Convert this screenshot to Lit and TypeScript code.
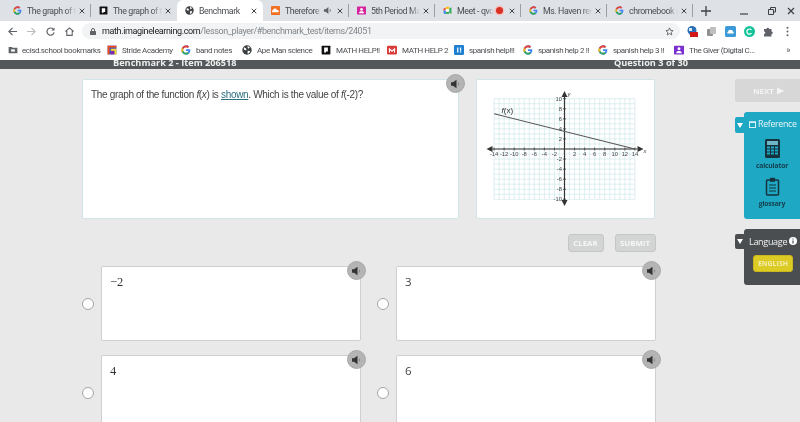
import { LitElement, html, css, svg } from "lit";
import { customElement } from "lit/decorators.js";

const G = () => html`<svg class="fav" viewBox="0 0 16 16"><path d="M14.7 6.6H8v2.9h3.9c-.4 1.9-2 3-3.9 3a4.5 4.5 0 0 1 0-9c1.1 0 2.1.4 2.9 1.1l2.1-2.1A7.400 7.400 0 0 0 .6 8 7.400 7.400 0 0 0 8 15.400c3.700 0 7-2.700 7-7.400 0-.500-.100-.900-.300-1.400z" fill="#4285f4"/><path d="M1.400 4.700 3.800 6.500A4.500 4.500 0 0 1 8 3.500c1.100 0 2.100.4 2.900 1.100l2.100-2.100A7.400 7.400 0 0 0 1.400 4.700z" fill="#ea4335"/><path d="M1.400 11.300 3.800 9.500A4.500 4.500 0 0 0 8 12.500c1 0 1.900-.300 2.600-.800l2.300 1.800A7.400 7.400 0 0 1 1.400 11.300z" fill="#34a853"/><path d="M3.800 9.500a4.500 4.500 0 0 1 0-3L1.400 4.700a7.400 7.400 0 0 0 0 6.600z" fill="#fbbc05"/></svg>`;
const Globe = () => html`<svg class="fav" viewBox="0 0 16 16"><circle cx="8" cy="8" r="7.500" fill="#3c4043"/><path d="M3 3.500 6 5l1.500 2-2 1.500L3 7zM9 1.500l3.500 2L10.500 6 9 4.500zM9 9l4 .5-1.500 3.500L9 14z" fill="#fff"/></svg>`;
const Nb = () => html`<svg class="fav" viewBox="0 0 16 16"><rect x="1" y="1" width="14" height="14" rx="1" fill="#111"/><path d="M5 4h6v6.500H8V12H5z" fill="#fff"/></svg>`;
const Cloud = () => html`<svg class="fav" viewBox="0 0 16 16"><rect width="16" height="16" rx="1.500" fill="#f26f23"/><path d="M2 11V8.500c.5-1 1-1 1.500-1 .3-1.500 1.500-3 3.500-3 1.800 0 3 1 3.500 2.500C12 6.800 14 7.500 14 9.200 14 10.500 13 11 12 11z" fill="#fff"/></svg>`;
const Person = (c: string) => html`<svg class="fav" viewBox="0 0 16 16"><rect y="1" width="16" height="14" rx="1" fill="${c}"/><circle cx="8" cy="6" r="2.300" fill="#fff"/><path d="M3.500 13c0-2.500 2-3.500 4.500-3.500s4.500 1 4.500 3.500z" fill="#fff"/></svg>`;
const Meet = () => html`<svg class="fav" viewBox="0 0 16 16"><path d="M1 4h4v4H1z" fill="#ea4335"/><path d="M5 1.500h6v4H5z" fill="#fbbc05"/><path d="M1 8h4v6H2.500L1 12.500z" fill="#4285f4"/><path d="M5 10h6v4H5z" fill="#34a853"/><path d="M11 4.500 15 2v12l-4-2.500z" fill="#34a853"/><rect x="5" y="5" width="6" height="5" fill="#fff"/></svg>`;
const X = () => html`<svg class="close" viewBox="0 0 8 8"><path d="M1 1l6 6M7 1 1 7" stroke="#3c4043" stroke-width="1.300" fill="none"/></svg>`;
const Spk = () => html`<svg class="spk" viewBox="0 0 10 10"><path d="M0 3.300h2L5.500 .8v8.400L2 6.700H0z" fill="#333"/><path d="M7 3.500a2 2 0 0 1 0 3" stroke="#888" fill="none"/></svg>`;

const tabs = [
  { icon: G(), t: "The graph of th", sep: true },
  { icon: Nb(), t: "The graph of th" },
  { icon: Globe(), t: "Benchmark", active: true },
  { icon: Cloud(), t: "Therefore I", extra: html`<svg class="ex" viewBox="0 0 10 10"><path d="M1 3.500h2L6 1v8L3 6.500H1z" fill="#5f6368"/><path d="M7.500 3.500a2 2 0 0 1 0 3" stroke="#5f6368" fill="none"/></svg>`, sep: true },
  { icon: Person("#d6249f"), t: "5th Period Mat", sep: true },
  { icon: Meet(), t: "Meet - qvo-", extra: html`<span class="rec"></span>`, sep: true },
  { icon: G(), t: "Ms. Haven reco", sep: true },
  { icon: G(), t: "chromebook sc", sep: true },
];

const marks = [
  { w: 99, i: html`<svg class="fav" viewBox="0 0 16 16"><path d="M1 3h5l1.500 1.500H15V13H1z" fill="#5f6368"/><rect x="5" y="7" width="6" height="3.500" fill="#fff"/></svg>`, t: "ecisd.school bookmarks", first: true },
  { w: 74, i: html`<svg class="fav" viewBox="0 0 16 16"><rect x="1" y="1" width="14" height="14" fill="#3f51b5"/><path d="M1 1h14v3H4v11H1z" fill="#f4511e"/><path d="M6 6h9v9h-3V9H6z" fill="#fdd835"/><rect x="6" y="10" width="5" height="5" fill="#8e24aa"/></svg>`, t: "Stride Academy" },
  { w: 61, i: G(), t: "band notes" },
  { w: 79, i: Globe(), t: "Ape Man science" },
  { w: 66, i: Nb(), t: "MATH HELP!!" },
  { w: 67, i: html`<svg class="fav" viewBox="0 0 16 16"><rect y="1" width="16" height="14" rx="2" fill="#d93a3a"/><path d="M3 12V4.500l5 4 5-4V12h-2V8.500l-3 2.500-3-2.500V12z" fill="#fff"/></svg>`, t: "MATH HELP 2" },
  { w: 69, i: html`<svg class="fav" viewBox="0 0 16 16"><rect width="16" height="16" rx="2" fill="#1e7fd0"/><path d="M5 4h2v8H5zM9.500 4h2v5h-2zM9.500 10h2v2h-2z" fill="#fff"/></svg>`, t: "spanish help!!!" },
  { w: 75, i: G(), t: "spanish help 2 !!" },
  { w: 76, i: G(), t: "spanish help 3 !!" },
  { w: 107, i: Person("#7b2fd0"), t: "The Giver (Digital C..." },
];

function graph() {
  const U = 5.03, ox = 70, oy = 70;
  const lines = [];
  for (let i = -14; i <= 14; i++) lines.push(svg`<line x1=${ox + i * U} y1=${oy - 50.3} x2=${ox + i * U} y2=${oy + 50.3} class="g"/>`);
  for (let i = -10; i <= 10; i++) lines.push(svg`<line x1=${ox - 70.4} y1=${oy + i * U} x2=${ox + 70.4} y2=${oy + i * U} class="g"/>`);
  const labels = [];
  for (let i = -14; i <= 14; i += 2) {
    if (i === 0) continue;
    lines.push(svg`<line x1=${ox + i * U} y1=${oy - 1.500} x2=${ox + i * U} y2=${oy + 1.500} class="t"/>`);
    labels.push(svg`<text x=${ox + i * U} y=${oy + 7} text-anchor="middle" class="n">${i < 0 ? "-" + -i : i}</text>`);
  }
  for (let i = -10; i <= 10; i += 2) {
    if (i === 0) continue;
    lines.push(svg`<line x1=${ox - 1.500} y1=${oy - i * U} x2=${ox + 1.500} y2=${oy - i * U} class="t"/>`);
    labels.push(svg`<text x=${ox - 2.500} y=${oy - i * U + 2} text-anchor="end" class="n">${i}</text>`);
  }
  return html`<svg class="graph" viewBox="0 0 179 140" width="179" height="140">
    <g transform="translate(18.500 0)">
      ${lines}
      <line x1=${ox - 72} y1=${oy} x2=${ox + 73} y2=${oy} class="a"/>
      <line x1=${ox} y1=${oy - 52} x2=${ox} y2=${oy + 52} class="a"/>
      <path d=${`M${ox - 78} ${oy}l6-3v6z M${ox + 79} ${oy}l-6-3v6z M${ox} ${oy - 58}l-3 6h6z M${ox} ${oy + 57}l-3-6h6z`} fill="#333"/>
      <line x1=${ox - 70.4} y1=${oy - 35.2} x2=${ox + 70.4} y2=${oy} stroke="#555" stroke-width="1.100"/>
      ${labels}
      <text x=${ox + 3} y=${oy - 53} class="n i">y</text>
      <text x=${ox + 79} y=${oy + 4} class="n i">x</text>
      <text x=${ox - 63} y=${oy - 36} class="fx"><tspan font-style="italic">f</tspan>(x)</text>
    </g>
  </svg>`;
}

const answers = [
  { t: "−2", serif: true },
  { t: "3" },
  { t: "4", serif: true },
  { t: "6" },
];

@customElement("app-root")
export class AppRoot extends LitElement {
  static styles = css`
    :host { display: block; width: 800px; height: 422px; overflow: hidden; background: #e9e9e9; font-family: "Liberation Sans", Arial, sans-serif; filter: blur(0.25px); }
    svg { display: block; flex: none; }
    .tabs { height: 21px; background: #dee1e6; display: flex; align-items: center; padding-left: 5px; font: 8.800px Roboto, sans-serif; letter-spacing: -0.400px; color: #4a4d51; }
    .tab { width: 86px; height: 21px; box-sizing: border-box; display: flex; align-items: center; padding: 0 4px 0 8px; position: relative; flex: none; }
    .tab.active { background: #fff; border-radius: 6px 6px 0 0; }
    .tab.sep::after { content: ""; position: absolute; right: 0; top: 4px; height: 13px; width: 1px; background: #9aa0a6; }
    .fav { width: 9px; height: 9px; margin-right: 5px; }
    .title { flex: 1; white-space: nowrap; overflow: hidden; -webkit-mask-image: linear-gradient(90deg, #000 80%, transparent); mask-image: linear-gradient(90deg, #000 80%, transparent); }
    .active .title { -webkit-mask-image: none; mask-image: none; }
    .close { width: 6px; height: 6px; margin-left: 3px; margin-right: 2px; }
    .ex { width: 9px; height: 9px; margin-left: 1px; margin-right: 2px; }
    .rec { width: 7px; height: 7px; border-radius: 50%; background: #d93025; box-shadow: 0 0 0 1.500px #f3c2bd; margin: 0 3px 0 2px; flex: none; }
    .plus { margin-left: 8px; width: 10px; height: 10px; }
    .win { margin-left: auto; display: flex; align-items: center; gap: 11px; padding-right: 5px; }
    .win svg { width: 8px; height: 8px; }
    .win svg:first-child { margin-right: 9px; }
    .tool { height: 20px; display: flex; align-items: center; padding-left: 8px; background: #fff; box-sizing: border-box; }
    .tool .nav { width: 9px; height: 9px; margin-right: 10px; }
    .omni { width: 598px; margin-left: -2px; height: 16px; box-sizing: border-box; border-radius: 8px; background: #f1f3f4; display: flex; align-items: center; padding: 0 6px 0 8px; font: 9px Roboto, sans-serif; color: #80868b; white-space: nowrap; letter-spacing: -0.370px; }
    .omni b { font-weight: 400; color: #202124; }
    .lock { width: 6px; height: 7px; margin-right: 6px; }
    .star { width: 9px; height: 9px; margin-left: auto; }
    .exts { display: flex; align-items: center; gap: 8px; padding-left: 7px; }
    .exts svg { width: 11px; height: 11px; }
    .marks { height: 19px; display: flex; align-items: center; padding-left: 8px; background: #fff; font: 8px Roboto, sans-serif; letter-spacing: -0.380px; color: #4a4d51; box-sizing: border-box; padding-bottom: 1px; }
    .mark { display: flex; align-items: center; white-space: nowrap; flex: none; }
    .mark .fav { width: 10px; height: 10px; margin-right: 5px; }
    .mark.first .fav { margin-right: 4px; }
    .more { margin-left: auto; padding-right: 10px; font-size: 9px; }
    .bar { height: 9px; background: #54585a; overflow: hidden; display: flex; color: #eee; font: bold 9.200px "Open Sans", sans-serif; line-height: 9px; }
    .bar span { margin-top: -2px; white-space: nowrap; }
    .bar .l { margin-left: 113px; width: 501px; flex: none; }
    .main { display: flex; padding: 10px 0 0 82px; align-items: flex-start; }
    .left { width: 574px; flex: none; }
    .top { display: flex; gap: 17px; height: 140px; }
    .prompt, .gcard { background: #fff; border: 1px solid #cfe5e8; border-radius: 2px; box-sizing: border-box; position: relative; }
    .prompt { width: 377px; padding: 8px 8px; font-size: 10px; letter-spacing: -0.330px; line-height: 14px; color: #444; }
    .prompt a { color: #2d6f80; text-decoration: underline; }
    .gcard { width: 179px; overflow: hidden; }
    .graph { margin: -1px; }
    .graph .g { stroke: #c9e4e8; stroke-width: 0.600px; }
    .graph .t { stroke: #333; stroke-width: 0.700px; }
    .graph .a { stroke: #333; stroke-width: 1.200px; }
    .graph .n { font: 5.800px "Liberation Sans", sans-serif; fill: #444; }
    .graph .i { font-style: italic; }
    .graph .fx { font: 8px "Liberation Sans", sans-serif; fill: #333; }
    .actions { display: flex; justify-content: flex-end; gap: 11px; margin-top: 15px; padding-right: 0.500px; }
    .btn { height: 18px; box-sizing: border-box; background: #d3d5d4; border: 1px solid #c4c7c6; border-radius: 3px; color: #f6f6f6; font: bold 7.800px "Open Sans", sans-serif; display: flex; align-items: center; justify-content: center; }
    .btn.c { width: 36px; }
    .btn.s { width: 41px; }
    .answers { display: grid; grid-template-columns: 260px 260px; column-gap: 35px; row-gap: 14px; margin-top: 14px; padding-left: 19px; }
    .ans { display: block; position: relative; height: 75px; box-sizing: border-box; background: #fff; border: 1px solid #cfcfcf; border-radius: 2px; padding: 8px; font: 11.500px "Open Sans", sans-serif; color: #444; line-height: 14px; }
    .ans.serif { font-family: "Liberation Serif", serif; font-size: 12.500px; color: #333; }
    .radio { position: absolute; left: -20px; top: 31px; width: 12px; height: 12px; box-sizing: border-box; background: #fff; border: 1px solid #a5a5a5; border-radius: 50%; }
    .sound { position: absolute; top: -6px; right: -6px; width: 19px; height: 19px; box-sizing: border-box; border-radius: 50%; background: #b4b4b4; border: 1px solid #a8a8a8; display: flex; align-items: center; justify-content: center; }
    .prompt .sound { top: -6px; right: -7px; }
    .spk { width: 10px; height: 10px; }
    .right { margin-left: 79px; width: 65px; flex: none; color: #fff; }
    .next { height: 23px; background: #d7d7d7; border-radius: 2px 0 0 2px; display: flex; align-items: center; justify-content: center; font: bold 7.800px "Open Sans", sans-serif; color: #f4f4f4; gap: 3px; padding-left: 2px; box-sizing: border-box; }
    .panel { margin: 10px 0 0 9px; position: relative; border-radius: 3px 0 0 3px; box-sizing: border-box; }
    .panel.ref { background: #1fa8c4; height: 107px; padding-top: 5px; }
    .panel.lang { background: #4b4e50; height: 56px; margin-top: 10px; padding-top: 5px; }
    .ptab { position: absolute; left: -9px; top: 5px; width: 10px; height: 16px; border-radius: 2px 0 0 2px; display: flex; align-items: center; justify-content: center; background: #1fa8c4; }
    .lang .ptab { background: #4b4e50; height: 15px; }
    .ptab svg { width: 6px; height: 5px; }
    .phead { display: flex; align-items: center; padding-left: 5px; gap: 2px; font: 8.800px "Open Sans", sans-serif; letter-spacing: -0.300px; height: 14px; color: #e9f7fa; white-space: nowrap; }
    .phead svg { width: 7px; height: 7px; }
    .tool-item { display: flex; flex-direction: column; align-items: center; color: #15414f; font: bold 6.800px "Open Sans", sans-serif; letter-spacing: -0.200px; margin-top: 8px; }
    .tool-item svg { width: 15px; height: 19px; margin-bottom: 3px; }
    .tool-item + .tool-item { margin-top: 7px; }
    .lang .phead { color: #f2f2f2; padding-left: 5px; gap: 2px; font-size: 9px; }
    .lang .phead svg { width: 8px; height: 8px; }
    .eng { margin: 7px 0 0 9px; width: 40px; height: 17px; box-sizing: border-box; background: #dcca25; border: 1px solid #c9b71d; border-radius: 3px; color: #f5eeb0; font: bold 6.800px "Open Sans", sans-serif; display: flex; align-items: center; justify-content: center; letter-spacing: 0.020em; }
  `;

  render() {
    return html`
      <div class="tabs">
        ${tabs.map((t) => html`<div class="tab ${t.active ? "active" : ""} ${t.sep ? "sep" : ""}">${t.icon}<span class="title">${t.t}</span>${t.extra ?? ""}${X()}</div>`)}
        <svg class="plus" viewBox="0 0 10 10"><path d="M5 0v10M0 5h10" stroke="#3c4043" stroke-width="1.300"/></svg>
        <div class="win">
          <svg viewBox="0 0 8 8"><path d="M0 7h8" stroke="#3c4043" stroke-width="1.200"/></svg>
          <svg viewBox="0 0 8 8"><path d="M2.500 2.500V.5h5v4.500H5.500M.5 2.500h5v5h-5z" stroke="#3c4043" fill="none"/></svg>
          <svg viewBox="0 0 8 8"><path d="M1 1l6 6M7 1 1 7" stroke="#3c4043" stroke-width="1.200"/></svg>
        </div>
      </div>
      <div class="tool">
        <svg class="nav" viewBox="0 0 10 10"><path d="M10 5H1M5 1 1 5l4 4" stroke="#5f6368" stroke-width="1.300" fill="none"/></svg>
        <svg class="nav" viewBox="0 0 10 10"><path d="M0 5h9M5 1l4 4-4 4" stroke="#b9bcc0" stroke-width="1.300" fill="none"/></svg>
        <svg class="nav" viewBox="0 0 10 10"><path d="M8.500 3A4 4 0 1 0 9 6" stroke="#5f6368" stroke-width="1.300" fill="none"/><path d="M9.500 .5v3.500H6z" fill="#5f6368"/></svg>
        <svg class="nav" viewBox="0 0 10 10"><path d="M.5 5 5 1l4.500 4M2 4.500V9.300h6V4.500" stroke="#5f6368" stroke-width="1.200" fill="none"/></svg>
        <div class="omni">
          <svg class="lock" viewBox="0 0 6 7"><path d="M1.500 3V2a1.500 1.500 0 0 1 3 0v1" stroke="#5f6368" fill="none"/><rect y="3" width="6" height="4" rx=".5" fill="#5f6368"/></svg>
          <span><b>math.imaginelearning.com</b>/lesson_player/#benchmark_test/items/24051</span>
          <svg class="star" viewBox="0 0 10 10"><path d="M5 1l1.200 2.700 2.800.3-2.100 1.900.6 2.900L5 7.300 2.500 8.800l.6-2.900L1 4l2.800-.3z" stroke="#5f6368" fill="none"/></svg>
        </div>
        <div class="exts">
          <svg viewBox="0 0 11 11"><circle cx="5" cy="4.500" r="4.500" fill="#2a6cb5"/><path d="M2 2h3v3H2z" fill="#dbe9f5"/><rect x="3" y="6" width="8" height="5" rx=".5" fill="#d01616"/></svg>
          <svg viewBox="0 0 11 11"><rect x="1" y="3" width="6" height="7" rx="1" fill="#8d8f91"/><rect x="4" y="1" width="6" height="7" rx="1" fill="#bdbfc1"/></svg>
          <svg viewBox="0 0 11 11"><rect width="11" height="11" rx="1.500" fill="#3c9bd6"/><path d="M2.500 7.500h6V6.200L7 4H4L2.500 6.200z" fill="#fff"/></svg>
          <svg viewBox="0 0 11 11"><circle cx="5.500" cy="5.500" r="5.500" fill="#15c39a"/><path d="M7.500 4a2.600 2.600 0 1 0 0 3.200" stroke="#fff" stroke-width="1.200" fill="none"/></svg>
          <svg viewBox="0 0 11 11"><path d="M1 3h2.500a1.300 1.300 0 0 1 2.600 0H8.500v2.500a1.300 1.300 0 0 1 0 2.600V10.500H1V8a1.300 1.300 0 0 0 0-2.600z" fill="#5f6368"/></svg>
          <svg viewBox="0 0 11 11"><circle cx="5.500" cy="1.700" r="1" fill="#5f6368"/><circle cx="5.500" cy="5.500" r="1" fill="#5f6368"/><circle cx="5.500" cy="9.300" r="1" fill="#5f6368"/></svg>
        </div>
      </div>
      <div class="marks">
        ${marks.map((m) => html`<div class="mark ${m.first ? "first" : ""}" style="width:${m.w}px">${m.i}<span>${m.t}</span></div>`)}
        <span class="more">»</span>
      </div>
      <div class="bar"><span class="l">Benchmark 2 - Item 206518</span><span>Question 3 of 30</span></div>
      <div class="main">
        <div class="left">
          <div class="top">
            <div class="prompt">The graph of the function <i>f</i>(<i>x</i>) is <a>shown</a>. Which is the value of <i>f</i>(-2)?<div class="sound">${Spk()}</div></div>
            <div class="gcard">${graph()}</div>
          </div>
          <div class="actions"><div class="btn c">CLEAR</div><div class="btn s">SUBMIT</div></div>
          <div class="answers">
            ${answers.map((a) => html`<div class="ans ${a.serif ? "serif" : ""}"><span class="radio"></span>${a.t}<div class="sound">${Spk()}</div></div>`)}
          </div>
        </div>
        <div class="right">
          <div class="next">NEXT <svg width="7" height="8" viewBox="0 0 8 8"><path d="M0 0l8 4-8 4z" fill="#f4f4f4"/></svg></div>
          <div class="panel ref">
            <div class="ptab"><svg viewBox="0 0 6 5"><path d="M0 0h6L3 5z" fill="#fff"/></svg></div>
            <div class="phead"><svg viewBox="0 0 7 7"><rect x=".5" y="1" width="6" height="5.500" stroke="#d8f1f6" fill="none"/><rect y=".5" width="7" height="1.500" fill="#d8f1f6"/></svg>Reference</div>
            <div class="tool-item">
              <svg viewBox="0 0 15 19"><rect width="15" height="19" rx="1.500" fill="#16323d"/><rect x="2" y="2" width="11" height="4" fill="#6fb6c6"/>${[7.500, 10.500, 13.500].flatMap((y) => [2, 6, 10].map((x) => svg`<rect x=${x} y=${y} width="3" height="2" fill="#1fa8c4"/>`))}</svg>
              calculator
            </div>
            <div class="tool-item">
              <svg viewBox="0 0 15 19"><rect x="1.500" y="3" width="12" height="15" rx="1" stroke="#16323d" stroke-width="1.500" fill="none"/><rect x="5" y=".8" width="5" height="4" fill="#16323d"/><path d="M4 8h7M4 11h7M4 14h7" stroke="#16323d" stroke-width="1.200"/></svg>
              glossary
            </div>
          </div>
          <div class="panel lang">
            <div class="ptab"><svg viewBox="0 0 6 5"><path d="M0 0h6L3 5z" fill="#fff"/></svg></div>
            <div class="phead">Language<svg viewBox="0 0 8 8"><circle cx="4" cy="4" r="4" fill="#fff"/><path d="M4 3.400v3M4 1.500v1" stroke="#4b4e50" stroke-width="1.200"/></svg></div>
            <div class="eng">ENGLISH</div>
          </div>
        </div>
      </div>
    `;
  }
}
